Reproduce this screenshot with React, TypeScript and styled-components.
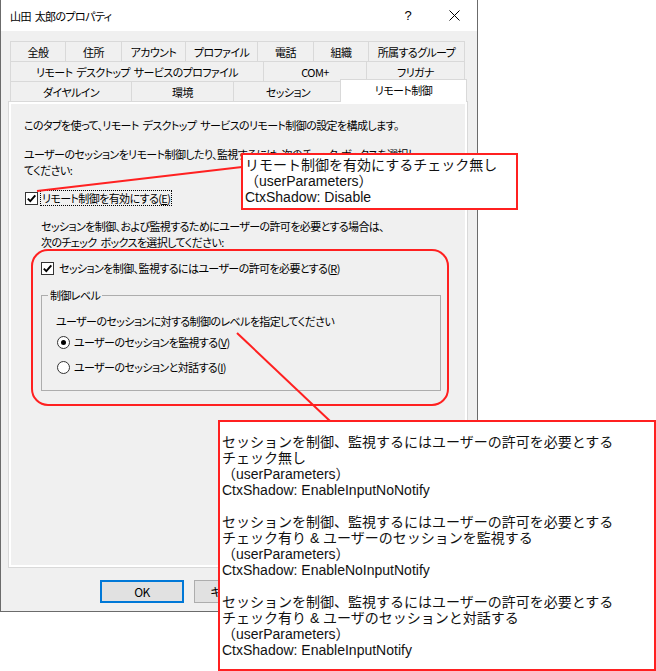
import React from "react";
import styled, { createGlobalStyle } from "styled-components";

const UI_FONT = `"Noto Sans CJK JP", "Noto Sans", sans-serif`;
const NOTE_FONT = `"Liberation Sans", Arial, "Noto Sans CJK JP", sans-serif`;
const RED = "#ff2020";

const GlobalStyle = createGlobalStyle`
  html, body { margin: 0; padding: 0; background: #fff; }
  body { font-family: ${UI_FONT}; }
`;

const Stage = styled.div`
  position: relative;
  width: 656px;
  height: 671px;
  overflow: hidden;
  background: #fff;
`;

const Window = styled.div`
  width: 478px;
  height: 612px;
  box-sizing: border-box;
  border: 1px solid #6b6b6b;
  border-top: none;
  background: #f0f0f0;
  display: flex;
  flex-direction: column;
  font-family: ${UI_FONT};
  font-size: 11px;
  letter-spacing: -0.6px;
  word-spacing: 2px;
  font-feature-settings: "palt";
  color: #000;
`;

const TitleBar = styled.div`
  height: 31px;
  background: #fff;
  display: flex;
  align-items: center;
  padding-left: 9px;
`;

const Title = styled.span`
  flex: 1;
  line-height: 16px;
`;

const CaptionButton = styled.span`
  width: 46px;
  height: 31px;
  display: flex;
  align-items: center;
  justify-content: center;
  font-family: "Liberation Sans", sans-serif;
  font-size: 13px;
  letter-spacing: 0;
`;

const Body = styled.div`
  flex: 1;
  display: flex;
  flex-direction: column;
  padding: 10px 0 9px 7px;
`;

const TabStrip = styled.div`
  margin-left: 2px;
  width: 455px;
  display: flex;
  flex-direction: column;
`;

const TabRow = styled.div`
  display: flex;
  height: 20px;
  align-items: flex-end;
`;

const Tab = styled.div<{ $w: number; $active?: boolean }>`
  width: ${(p) => p.$w}px;
  height: ${(p) => (p.$active ? 23 : 20)}px;
  box-sizing: border-box;
  flex: none;
  display: flex;
  align-items: center;
  justify-content: center;
  border-top: 1px solid #d9d9d9;
  border-left: 1px solid #d9d9d9;
  background: ${(p) => (p.$active ? "#fff" : "#f0f0f0")};
  white-space: nowrap;
  line-height: 16px;
  ${(p) =>
    p.$active
      ? `margin-left: -2px; margin-bottom: -1px; position: relative; z-index: 2; border-right: 1px solid #d9d9d9; padding-bottom: 2px;`
      : ""}
  &:last-child {
    border-right: 1px solid #d9d9d9;
  }
`;

const Panel = styled.div`
  width: 460px;
  height: 467px;
  box-sizing: border-box;
  border: 1px solid #d9d9d9;
  background: #fff;
  padding: 2px;
  display: flex;
`;

const PanelInner = styled.div`
  flex: 1;
  background: #f0f0f0;
  padding-left: 13px;
  display: flex;
  flex-direction: column;
`;

const Para = styled.p<{ $mt: number }>`
  margin: ${(p) => p.$mt}px 0 0;
  line-height: 16px;
  white-space: nowrap;
`;

const Indent = styled.div`
  margin-left: 17px;
  display: flex;
  flex-direction: column;
`;

const CheckRow = styled.div<{ $mt: number; $gap: number }>`
  display: flex;
  align-items: center;
  height: 16px;
  margin-top: ${(p) => p.$mt}px;
  gap: ${(p) => p.$gap}px;
  white-space: nowrap;
  line-height: 16px;
`;

const CheckBox = styled.span<{ $ml?: number }>`
  width: 13px;
  height: 13px;
  box-sizing: border-box;
  border: 1px solid #333;
  background: #fff;
  display: inline-flex;
  align-items: center;
  justify-content: center;
  margin-left: ${(p) => p.$ml ?? 0}px;
  flex: none;
`;

const Focus = styled.span`
  border: 1px dotted #000;
  padding: 0 1px;
  line-height: 14px;
`;

const U = styled.span`
  text-decoration: underline;
  text-underline-offset: 1px;
`;

const GroupBox = styled.fieldset`
  margin: 11px 0 0;
  width: 400px;
  height: 104px;
  box-sizing: border-box;
  border: 1px solid #adadad;
  padding: 10px 0 0 14px;
  display: flex;
  flex-direction: column;
`;

const Legend = styled.legend`
  padding: 0 2px;
  margin-left: -8px;
  line-height: 16px;
`;

const RadioRow = styled.div<{ $mt: number }>`
  display: flex;
  align-items: center;
  gap: 4px;
  height: 16px;
  margin-top: ${(p) => p.$mt}px;
  margin-left: 1px;
  white-space: nowrap;
  line-height: 16px;
`;

const Radio = styled.span<{ $on?: boolean }>`
  width: 13px;
  height: 13px;
  box-sizing: border-box;
  border-radius: 50%;
  border: 1px solid #333;
  background: #fff;
  display: inline-flex;
  align-items: center;
  justify-content: center;
  flex: none;
  &::after {
    content: "";
    width: 5px;
    height: 5px;
    border-radius: 50%;
    background: ${(p) => (p.$on ? "#000" : "transparent")};
  }
`;

const ButtonRow = styled.div`
  display: flex;
  gap: 10px;
  margin-top: 12px;
  padding-left: 92px;
`;

const Button = styled.div<{ $primary?: boolean }>`
  width: 84px;
  height: 23px;
  box-sizing: border-box;
  border: ${(p) => (p.$primary ? "2px solid #0078d7" : "1px solid #adadad")};
  background: #e1e1e1;
  display: flex;
  align-items: center;
  justify-content: center;
  line-height: 16px;
  font-size: 12px;
`;

const RedFrame = styled.div`
  position: absolute;
  left: 31px;
  top: 249px;
  width: 418px;
  height: 157px;
  box-sizing: border-box;
  border: 2px solid ${RED};
  border-radius: 17px;
  pointer-events: none;
`;

const Leaders = styled.svg`
  position: absolute;
  left: 0;
  top: 0;
  pointer-events: none;
`;

const Callout = styled.div<{ $x: number; $y: number; $w: number; $h: number; $pt: number }>`
  position: absolute;
  left: ${(p) => p.$x}px;
  top: ${(p) => p.$y}px;
  width: ${(p) => p.$w}px;
  height: ${(p) => p.$h}px;
  box-sizing: border-box;
  border: 2px solid ${RED};
  background: #fff;
  padding: ${(p) => p.$pt}px 0 0 2px;
  font-family: ${NOTE_FONT};
  font-size: 14px;
  line-height: 16px;
  color: #111;
  white-space: pre;
`;

const Check = () => (
  <svg width="11" height="11" viewBox="0 0 11 11">
    <path d="M1.8 5.6 L4.3 8.2 L9.3 2.4" fill="none" stroke="#000" strokeWidth="1.9" />
  </svg>
);

const CloseIcon = () => (
  <svg width="11" height="11" viewBox="0 0 11 11">
    <path d="M0.5 0.5 L10.5 10.5 M10.5 0.5 L0.5 10.5" stroke="#000" strokeWidth="1" />
  </svg>
);

const rows: { label: string; w: number; active?: boolean }[][] = [
  [
    { label: "全般", w: 55 },
    { label: "住所", w: 56 },
    { label: "アカウント", w: 64 },
    { label: "プロファイル", w: 72 },
    { label: "電話", w: 56 },
    { label: "組織", w: 55 },
    { label: "所属するグループ", w: 97 },
  ],
  [
    { label: "リモート デスクトップ サービスのプロファイル", w: 253 },
    { label: "COM+", w: 103 },
    { label: "フリガナ", w: 99 },
  ],
  [
    { label: "ダイヤルイン", w: 121 },
    { label: "環境", w: 102 },
    { label: "セッション", w: 109 },
    { label: "リモート制御", w: 127, active: true },
  ],
];

const note1 = `リモート制御を有効にするチェック無し
（userParameters）
CtxShadow: Disable`;

const note2 = `セッションを制御、監視するにはユーザーの許可を必要とする
チェック無し
（userParameters）
CtxShadow: EnableInputNoNotify

セッションを制御、監視するにはユーザーの許可を必要とする
チェック有り & ユーザーのセッションを監視する
（userParameters）
CtxShadow: EnableNoInputNotify

セッションを制御、監視するにはユーザーの許可を必要とする
チェック有り & ユーザのセッションと対話する
（userParameters）
CtxShadow: EnableInputNotify`;

export default function App() {
  return (
    <>
      <GlobalStyle />
      <Stage>
        <Window>
          <TitleBar>
            <Title>山田 太郎のプロパティ</Title>
            <CaptionButton>?</CaptionButton>
            <CaptionButton>
              <CloseIcon />
            </CaptionButton>
          </TitleBar>
          <Body>
            <TabStrip>
              {rows.map((row, i) => (
                <TabRow key={i}>
                  {row.map((t) => (
                    <Tab key={t.label} $w={t.w} $active={t.active}>
                      {t.label}
                    </Tab>
                  ))}
                </TabRow>
              ))}
            </TabStrip>
            <Panel>
              <PanelInner>
                <Para $mt={13}>
                  このタブを使って、リモート デスクトップ サービスのリモート制御の設定を構成します。
                </Para>
                <Para $mt={13}>
                  ユーザーのセッションをリモート制御したり、監視するには、次のチェック ボックスを選択し
                  <br />
                  てください:
                </Para>
                <CheckRow $mt={12} $gap={2}>
                  <CheckBox $ml={1}>
                    <Check />
                  </CheckBox>
                  <Focus>
                    リモート制御を有効にする(<U>E</U>)
                  </Focus>
                </CheckRow>
                <Indent>
                  <Para $mt={12}>
                    セッションを制御、および監視するためにユーザーの許可を必要とする場合は、
                    <br />
                    次のチェック ボックスを選択してください:
                  </Para>
                  <CheckRow $mt={10} $gap={5}>
                    <CheckBox>
                      <Check />
                    </CheckBox>
                    <span>
                      セッションを制御、監視するにはユーザーの許可を必要とする(<U>R</U>)
                    </span>
                  </CheckRow>
                  <GroupBox>
                    <Legend>制御レベル</Legend>
                    <Para $mt={0}>ユーザーのセッションに対する制御のレベルを指定してください</Para>
                    <RadioRow $mt={5}>
                      <Radio $on />
                      <span>
                        ユーザーのセッションを監視する(<U>V</U>)
                      </span>
                    </RadioRow>
                    <RadioRow $mt={9}>
                      <Radio />
                      <span>
                        ユーザーのセッションと対話する(<U>I</U>)
                      </span>
                    </RadioRow>
                  </GroupBox>
                </Indent>
              </PanelInner>
            </Panel>
            <ButtonRow>
              <Button $primary>OK</Button>
              <Button>キャンセル</Button>
            </ButtonRow>
          </Body>
        </Window>
        <RedFrame />
        <Leaders width="656" height="671" viewBox="0 0 656 671">
          <line x1="37" y1="191" x2="242" y2="167" stroke={RED} strokeWidth="2" />
          <line x1="237" y1="333" x2="330" y2="421" stroke={RED} strokeWidth="2" />
        </Leaders>
        <Callout $x={241} $y={153} $w={277} $h={57} $pt={2}>
          {note1}
        </Callout>
        <Callout $x={218} $y={420} $w={438} $h={251} $pt={12}>
          {note2}
        </Callout>
      </Stage>
    </>
  );
}
